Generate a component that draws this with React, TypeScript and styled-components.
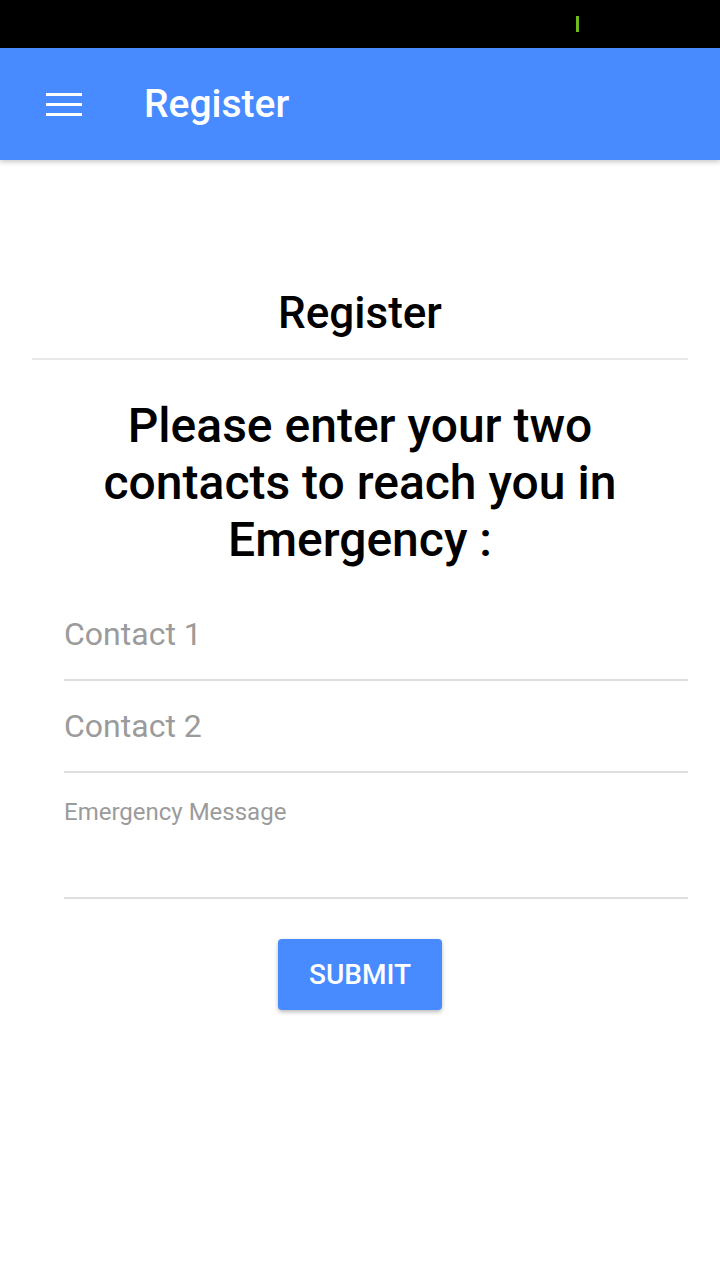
import React from "react";
import styled, { createGlobalStyle } from "styled-components";

const GlobalStyle = createGlobalStyle`
  html, body {
    margin: 0;
    padding: 0;
    background: #ffffff;
    font-family: Roboto, "Noto Sans", Arial, sans-serif;
  }
  * { box-sizing: border-box; }
`;

const Page = styled.div`
  width: 720px;
  min-height: 1280px;
  background: #ffffff;
  display: flex;
  flex-direction: column;
`;

const StatusBar = styled.div`
  height: 48px;
  background: #000000;
  display: flex;
  align-items: flex-start;
  padding-left: 576px;
  padding-top: 16px;
`;

const SignalTick = styled.span`
  display: block;
  width: 3px;
  height: 16px;
  background: #6fb820;
`;

const AppBar = styled.header`
  height: 112px;
  background: #488aff;
  display: flex;
  align-items: center;
  padding-left: 46px;
  box-shadow: 0 2px 5px rgba(0, 0, 0, 0.22);
  position: relative;
  z-index: 1;
`;

const MenuButton = styled.button`
  width: 36px;
  height: 23px;
  padding: 0;
  border: none;
  background: transparent;
  display: flex;
  flex-direction: column;
  justify-content: space-between;
  cursor: pointer;
`;

const MenuBar = styled.span`
  display: block;
  width: 36px;
  height: 3px;
  background: #ffffff;
`;

const AppTitle = styled.h1`
  margin: 0 0 0 62px;
  color: #ffffff;
  font-size: 39px;
  font-weight: 500;
  line-height: 46px;
`;

const Content = styled.main`
  padding: 0 32px;
  display: flex;
  flex-direction: column;
`;

const Heading = styled.h2`
  margin: 128px 0 0;
  text-align: center;
  font-size: 44px;
  font-weight: 500;
  line-height: 50px;
  color: #000000;
`;

const Divider = styled.hr`
  margin: 20px 0 0;
  border: none;
  height: 2px;
  background: #e8e8e8;
`;

const Prompt = styled.p`
  margin: 37px 0 0;
  padding: 0 16px;
  text-align: center;
  font-size: 48px;
  font-weight: 500;
  line-height: 57px;
  color: #000000;
`;

const Form = styled.form`
  margin: 21px 0 0 32px;
  display: flex;
  flex-direction: column;
`;

const TextInput = styled.input`
  display: block;
  width: 100%;
  height: 92px;
  padding: 0;
  border: none;
  border-bottom: 2px solid #dedede;
  outline: none;
  background: transparent;
  font-family: Roboto, "Noto Sans", Arial, sans-serif;
  font-size: 32px;
  color: #000;
  &::placeholder {
    color: #9b9b9b;
  }
`;

const MessageInput = styled.textarea`
  display: block;
  width: 100%;
  height: 126px;
  padding: 25px 0 0;
  border: none;
  border-bottom: 2px solid #dedede;
  outline: none;
  resize: none;
  background: transparent;
  font-family: Roboto, "Noto Sans", Arial, sans-serif;
  font-size: 24px;
  line-height: 28px;
  color: #000;
  &::placeholder {
    color: #9b9b9b;
  }
`;

const SubmitButton = styled.button`
  align-self: center;
  margin: 40px 0 0 -32px;
  width: 164px;
  height: 71px;
  border: none;
  border-radius: 4px;
  background: #488aff;
  color: #ffffff;
  font-family: Roboto, "Noto Sans", Arial, sans-serif;
  font-size: 28px;
  font-weight: 500;
  box-shadow: 0 2px 4px rgba(0, 0, 0, 0.28);
  cursor: pointer;
`;

export default function App() {
  return (
    <>
      <GlobalStyle />
      <Page>
        <StatusBar>
          <SignalTick />
        </StatusBar>
        <AppBar>
          <MenuButton type="button" aria-label="menu">
            <MenuBar />
            <MenuBar />
            <MenuBar />
          </MenuButton>
          <AppTitle>Register</AppTitle>
        </AppBar>
        <Content>
          <Heading>Register</Heading>
          <Divider />
          <Prompt>
            Please enter your two contacts to reach you in Emergency :
          </Prompt>
          <Form onSubmit={(e) => e.preventDefault()}>
            <TextInput placeholder="Contact 1" />
            <TextInput placeholder="Contact 2" />
            <MessageInput placeholder="Emergency Message" />
            <SubmitButton type="submit">SUBMIT</SubmitButton>
          </Form>
        </Content>
      </Page>
    </>
  );
}
